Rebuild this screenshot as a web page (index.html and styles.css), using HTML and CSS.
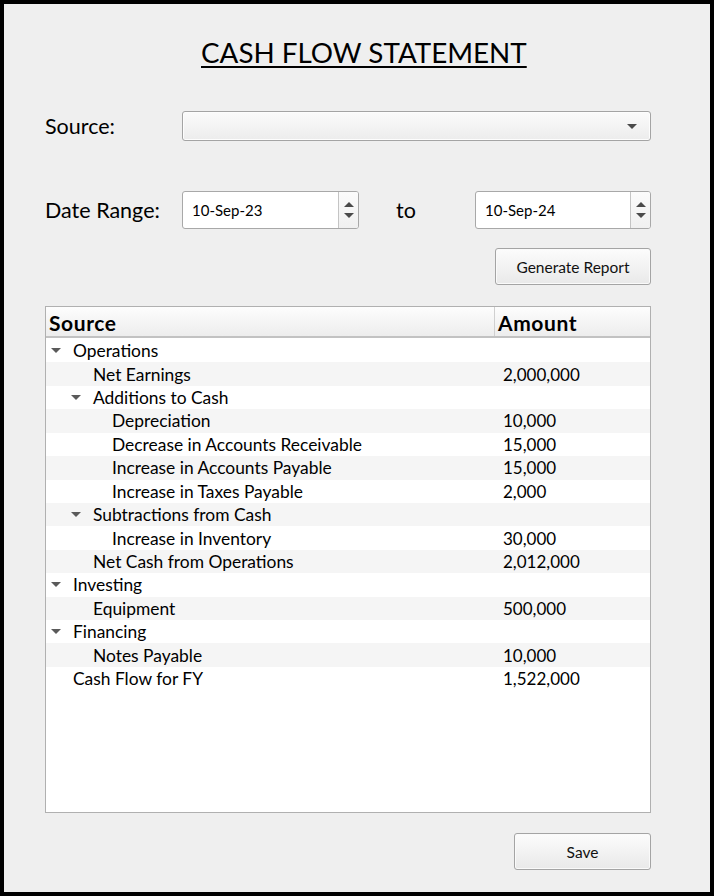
FILE: index.html
```html
<!DOCTYPE html>
<html>
<head>
<meta charset="utf-8">
<link rel="stylesheet" href="styles.css">
</head>
<body>
<div class="window">
  <div class="title-row"><h1 class="title">CASH FLOW STATEMENT</h1></div>

  <div class="row source-row">
    <label class="label">Source:</label>
    <div class="combo"><span class="combo-arrow"></span></div>
  </div>

  <div class="row date-row">
    <label class="label">Date Range:</label>
    <div class="spin">
      <span class="spin-text">10-Sep-23</span>
      <span class="spin-btns"><span class="up"></span><span class="down"></span></span>
    </div>
    <span class="to">to</span>
    <div class="spin spin2">
      <span class="spin-text">10-Sep-24</span>
      <span class="spin-btns"><span class="up"></span><span class="down"></span></span>
    </div>
  </div>

  <div class="btn-row"><button class="btn gen">Generate Report</button></div>

  <div class="tree">
    <div class="tree-head">
      <div class="hcell hsrc">Source</div>
      <div class="hcell hamt">Amount</div>
    </div>
    <div class="tree-body">
      <div class="trow"><div class="c1 l0"><span class="br open"></span>Operations</div><div class="c2"></div></div>
      <div class="trow"><div class="c1 l1"><span class="br"></span>Net Earnings</div><div class="c2">2,000,000</div></div>
      <div class="trow"><div class="c1 l1"><span class="br open"></span>Additions to Cash</div><div class="c2"></div></div>
      <div class="trow"><div class="c1 l2"><span class="br"></span>Depreciation</div><div class="c2">10,000</div></div>
      <div class="trow"><div class="c1 l2"><span class="br"></span>Decrease in Accounts Receivable</div><div class="c2">15,000</div></div>
      <div class="trow"><div class="c1 l2"><span class="br"></span>Increase in Accounts Payable</div><div class="c2">15,000</div></div>
      <div class="trow"><div class="c1 l2"><span class="br"></span>Increase in Taxes Payable</div><div class="c2">2,000</div></div>
      <div class="trow"><div class="c1 l1"><span class="br open"></span>Subtractions from Cash</div><div class="c2"></div></div>
      <div class="trow"><div class="c1 l2"><span class="br"></span>Increase in Inventory</div><div class="c2">30,000</div></div>
      <div class="trow"><div class="c1 l1"><span class="br"></span>Net Cash from Operations</div><div class="c2">2,012,000</div></div>
      <div class="trow"><div class="c1 l0"><span class="br open"></span>Investing</div><div class="c2"></div></div>
      <div class="trow"><div class="c1 l1"><span class="br"></span>Equipment</div><div class="c2">500,000</div></div>
      <div class="trow"><div class="c1 l0"><span class="br open"></span>Financing</div><div class="c2"></div></div>
      <div class="trow"><div class="c1 l1"><span class="br"></span>Notes Payable</div><div class="c2">10,000</div></div>
      <div class="trow"><div class="c1 l0"><span class="br"></span>Cash Flow for FY</div><div class="c2">1,522,000</div></div>
    </div>
  </div>

  <div class="btn-row save-row"><button class="btn save">Save</button></div>
</div>
</body>
</html>
```

FILE: styles.css
```css
* { box-sizing: border-box; }
html, body { margin: 0; padding: 0; }
body {
  width: 714px;
  height: 896px;
  font-family: Lato, "Open Sans", sans-serif;
  color: #000;
}
.window {
  width: 714px;
  height: 896px;
  border: 4px solid #000;
  background: #efefef;
  padding: 32px 59px 0 41px;
  display: flex;
  flex-direction: column;
}
.title-row {
  height: 40px;
  padding-left: 156px;
}
.title {
  margin: 0;
  font-weight: 400;
  font-size: 27.8px;
  line-height: 34px;
  text-decoration: underline;
  text-decoration-thickness: 2px;
  text-underline-offset: 3px;
  white-space: nowrap;
}
.row {
  display: flex;
  align-items: center;
}
.label {
  font-size: 21.5px;
  width: 137px;
  flex: none;
}
.source-row {
  margin-top: 35px;
  height: 30px;
}
.combo {
  flex: 1;
  height: 30px;
  border: 1px solid #a4a4a4;
  border-radius: 3px;
  background: linear-gradient(#fbfbfb, #ececec);
  box-shadow: inset 0 0 0 1px #fdfdfd;
  display: flex;
  align-items: center;
  justify-content: flex-end;
  padding-right: 13px;
}
.combo-arrow {
  width: 0;
  height: 0;
  border-left: 5px solid transparent;
  border-right: 5px solid transparent;
  border-top: 5px solid #4a4a4a;
}
.date-row {
  margin-top: 50px;
  height: 38px;
}
.spin {
  width: 177px;
  height: 38px;
  background: #fff;
  border: 1px solid #a8a8a8;
  border-radius: 3px;
  display: flex;
  align-items: center;
}
.spin2 { width: 176px; }
.spin-text {
  flex: 1;
  padding-left: 9px;
  font-size: 15px;
}
.spin-btns {
  width: 20px;
  height: 100%;
  border-left: 1px solid #c4c4c4;
  background: linear-gradient(#fbfbfb, #f0f0f0);
  border-radius: 0 2px 2px 0;
  display: flex;
  flex-direction: column;
  align-items: center;
  justify-content: center;
  gap: 6px;
}
.up {
  width: 0; height: 0;
  border-left: 5px solid transparent;
  border-right: 5px solid transparent;
  border-bottom: 5px solid #4a4a4a;
}
.down {
  width: 0; height: 0;
  border-left: 5px solid transparent;
  border-right: 5px solid transparent;
  border-top: 5px solid #4a4a4a;
}
.to {
  font-size: 21.5px;
  margin-left: 37px;
  width: 79px;
}
.btn-row {
  display: flex;
  justify-content: flex-end;
}
.btn {
  font-family: Lato, "Open Sans", sans-serif;
  font-size: 15.5px;
  color: #111;
  background: linear-gradient(#fcfcfc, #e9e9e9);
  border: 1px solid #a4a4a4;
  border-radius: 3px;
  box-shadow: inset 0 0 0 1px #fafafa;
  padding: 0;
}
.gen {
  margin-top: 19px;
  width: 156px;
  height: 37px;
}
.tree {
  margin-top: 21px;
  height: 507px;
  background: #fff;
  border: 1px solid #b0b0b0;
  display: flex;
  flex-direction: column;
}
.tree-head {
  display: flex;
  height: 31px;
  flex: none;
  background: linear-gradient(#fdfdfd, #ededed);
  border-bottom: 2px solid #c2c2c2;
}
.hcell {
  font-weight: 700;
  font-size: 21px;
  letter-spacing: 0.6px;
  display: flex;
  align-items: flex-end;
  padding-bottom: 1px;
}
.hsrc {
  width: 449px;
  padding-left: 3px;
  border-right: 1px solid #d0d0d0;
}
.hamt {
  flex: 1;
  padding-left: 3px;
}
.tree-body {
  padding-top: 1px;
}
.trow {
  display: flex;
  height: 23.43px;
  align-items: center;
  font-size: 17.4px;
}
.trow:nth-child(even) { background: #f5f5f5; }
.c1 {
  width: 449px;
  display: flex;
  align-items: center;
}
.c2 {
  flex: 1;
  padding-left: 8px;
  font-size: 17px;
}
.l1 { padding-left: 20px; }
.l2 { padding-left: 39px; }
.br {
  width: 27px;
  flex: none;
  height: 10px;
  display: flex;
  align-items: center;
}
.br.open::before {
  content: "";
  margin-left: 5px;
  width: 0; height: 0;
  border-left: 5px solid transparent;
  border-right: 5px solid transparent;
  border-top: 5px solid #5a5a5a;
}
.save-row { margin-top: 20px; }
.save {
  width: 137px;
  height: 37px;
}
```
